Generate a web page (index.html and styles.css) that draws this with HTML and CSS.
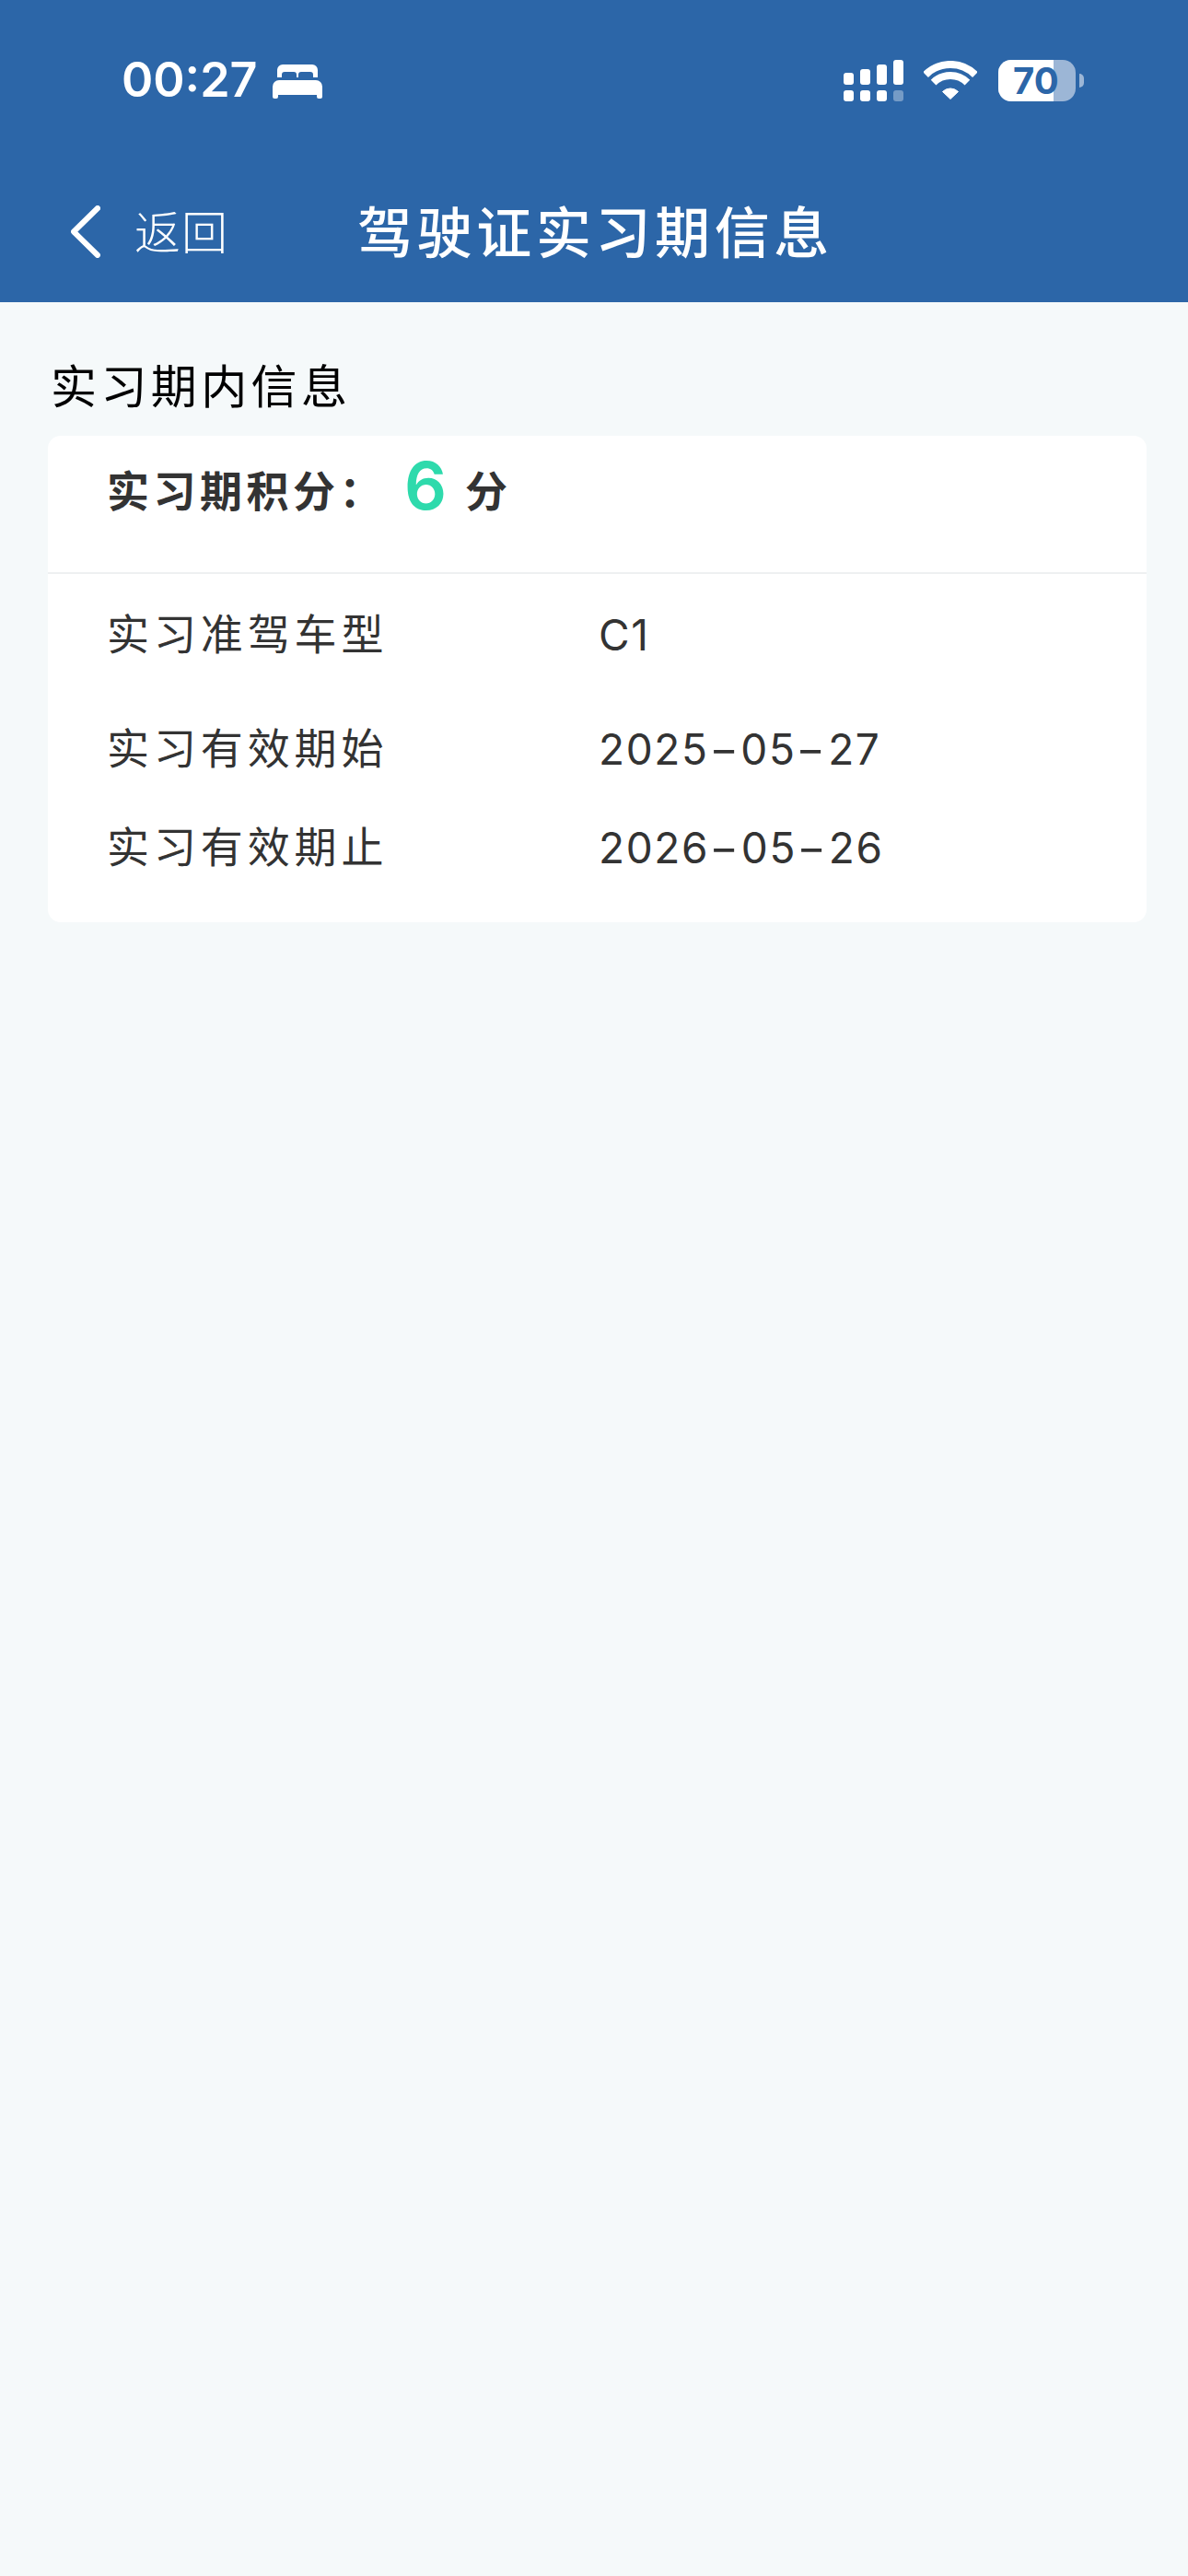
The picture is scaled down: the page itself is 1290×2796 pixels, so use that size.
FILE: index.html
```html
<!DOCTYPE html>
<html lang="zh-CN">
<head>
    <meta charset="UTF-8">
    <meta name="viewport" content="width=device-width, initial-scale=1.0">
    <title>驾驶证实习期信息</title>
    <link rel="stylesheet" href="styles.css">
</head>
<body>
    <header class="header">
        <div class="status-bar">
            <div class="status-left">
                <span class="time">00:27</span>
                <svg class="bed-icon" viewBox="0 0 54 37" fill="#fff">
                    <path fill-rule="evenodd" d="M11 0h32a6 6 0 0 1 6 6v8h-5v-3a3 3 0 0 0-3-3H31a3 3 0 0 0-3 3v3h-2v-3a3 3 0 0 0-3-3H13a3 3 0 0 0-3 3v3H5V6a6 6 0 0 1 6-6z"/>
                    <path d="M7 17h40a7 7 0 0 1 7 7v11a2 2 0 0 1-2 2h-2a2 2 0 0 1-2-2v-2H6v2a2 2 0 0 1-2 2H2a2 2 0 0 1-2-2V24a7 7 0 0 1 7-7z"/>
                </svg>
            </div>
            <div class="status-right">
                <svg class="signal-icon" viewBox="0 0 65 45" fill="#fff">
                    <rect x="0" y="14" width="11" height="13" rx="3"/>
                    <rect x="18" y="10" width="11" height="17" rx="3"/>
                    <rect x="36" y="5" width="11" height="22" rx="3"/>
                    <rect x="54" y="0" width="11" height="27" rx="3"/>
                    <rect x="0" y="33" width="11" height="12" rx="3"/>
                    <rect x="18" y="33" width="11" height="12" rx="3"/>
                    <rect x="36" y="33" width="11" height="12" rx="3"/>
                    <rect x="54" y="33" width="11" height="12" rx="3" opacity="0.35"/>
                </svg>
                <svg class="wifi-icon" viewBox="0 0 58 42" fill="none" stroke="#fff">
                    <path stroke-width="8" d="M2.1 15.1A38 38 0 0 1 55.9 15.1"/>
                    <path stroke-width="8" d="M10.6 23.6A26 26 0 0 1 47.4 23.6"/>
                    <path fill="#fff" stroke-width="1" stroke-linejoin="round" d="M20.5 33.5A12 12 0 0 1 37.5 33.5L29 41.5Z"/>
                </svg>
                <div class="battery">
                    <div class="battery-body">
                        <div class="battery-fill"></div>
                        <span class="battery-text">70</span>
                    </div>
                    <div class="battery-nub"></div>
                </div>
            </div>
        </div>
        <nav class="nav-bar">
            <div class="back">
                <svg class="back-icon" viewBox="0 0 32 57" fill="none" stroke="#fff" stroke-width="6" stroke-linecap="round" stroke-linejoin="round">
                    <path d="M29 3L3 28.5L29 54"/>
                </svg>
                <span class="back-text">返回</span>
            </div>
            <h1 class="nav-title">驾驶证实习期信息</h1>
            <div></div>
        </nav>
    </header>

    <main class="content">
        <h2 class="section-title">实习期内信息</h2>
        <section class="card">
            <div class="score-row">
                <span class="score-label">实习期积分：</span>
                <span class="score-value">6</span>
                <span class="score-unit">分</span>
            </div>
            <div class="rows">
                <div class="row row-first">
                    <span class="row-label">实习准驾车型</span>
                    <span class="row-value">C1</span>
                </div>
                <div class="row">
                    <span class="row-label">实习有效期始</span>
                    <span class="row-value">2025<span class="dash">-</span>05<span class="dash">-</span>27</span>
                </div>
                <div class="row">
                    <span class="row-label">实习有效期止</span>
                    <span class="row-value">2026<span class="dash">-</span>05<span class="dash">-</span>26</span>
                </div>
            </div>
        </section>
    </main>
</body>
</html>
```

FILE: styles.css
```css
html, body {
    margin: 0;
    padding: 0;
}
body {
    width: 1290px;
    height: 2796px;
    overflow: hidden;
    background-color: #f5f9fa;
    font-family: Inter, "Noto Sans CJK SC", sans-serif;
}
.header {
    background-color: #2c66a8;
    color: #fff;
    height: 328px;
}
.status-bar {
    height: 174px;
    display: flex;
    align-items: center;
    justify-content: space-between;
    padding: 0 113px 0 132px;
}
.status-left {
    display: flex;
    align-items: center;
    gap: 16px;
}
.time {
    font-size: 52px;
    font-weight: 600;
    line-height: 64px;
}
.bed-icon {
    width: 54px;
    height: 37px;
    margin-top: 3px;
}
.status-right {
    display: flex;
    align-items: center;
}
.signal-icon {
    width: 65px;
    height: 45px;
    margin-right: 22px;
}
.wifi-icon {
    width: 58px;
    height: 42px;
    margin-right: 23px;
}
.battery {
    display: flex;
    align-items: center;
    gap: 4px;
}
.battery-body {
    position: relative;
    width: 84px;
    height: 45px;
    border-radius: 14px;
    background-color: #9cb6d6;
}
.battery-fill {
    width: 60px;
    height: 100%;
    border-radius: 14px 0 0 14px;
    background-color: #fff;
}
.battery-text {
    position: absolute;
    left: 16px;
    top: 0;
    font-size: 40px;
    font-weight: 700;
    line-height: 45px;
    color: #2c66a8;
}
.battery-nub {
    width: 5px;
    height: 15px;
    border-radius: 0 5px 5px 0;
    background-color: #9cb6d6;
}
.nav-bar {
    height: 154px;
    display: grid;
    grid-template-columns: 1fr auto 1fr;
    align-items: center;
}
.back {
    display: flex;
    align-items: center;
    padding-left: 77px;
}
.back-icon {
    width: 32px;
    height: 57px;
}
.back-text {
    margin-left: 37px;
    font-size: 50px;
    font-weight: 300;
    letter-spacing: 1px;
    line-height: 60px;
    margin-top: 4px;
}
.nav-title {
    margin: 4px 0 0 3px;
    font-size: 60px;
    font-weight: 500;
    letter-spacing: 4.6px;
    line-height: 70px;
}
.content {
    padding: 0 45px 0 52px;
}
.section-title {
    margin: 0;
    padding: 56px 0 0 3px;
    font-size: 50px;
    font-weight: 400;
    letter-spacing: 4.4px;
    line-height: 72px;
    height: 89px;
    color: #000;
}
.card {
    background-color: #fff;
    border-radius: 14px;
}
.score-row {
    height: 150px;
    box-sizing: border-box;
    padding: 22px 0 0 64px;
    border-bottom: 2px solid #eef0f1;
    display: flex;
    align-items: flex-start;
    color: #333;
}
.score-label,
.score-unit {
    font-size: 46px;
    font-weight: 700;
    letter-spacing: 4.5px;
    line-height: 76px;
}
.score-value {
    margin: 0 20px 0 20px;
    font-size: 72px;
    font-weight: 600;
    line-height: 64px;
    color: #2edaac;
}
.rows {
    padding: 32px 0 51px 64px;
}
.row {
    display: flex;
    height: 64px;
    margin-top: 43px;
    align-items: center;
    color: #333;
    font-size: 46px;
    letter-spacing: 4.9px;
}
.row-first {
    margin-top: 0;
    margin-bottom: 60px;
}
.row-first + .row {
    margin-top: 0;
}
.row-label {
    width: 534px;
    flex-shrink: 0;
    margin-top: -4px;
}
.row-value {
    font-size: 46px;
    letter-spacing: 1.6px;
    margin-top: 4px;
}
.dash {
    display: inline-block;
    margin: 0 6px;
    transform: scaleX(1.5);
}
```
